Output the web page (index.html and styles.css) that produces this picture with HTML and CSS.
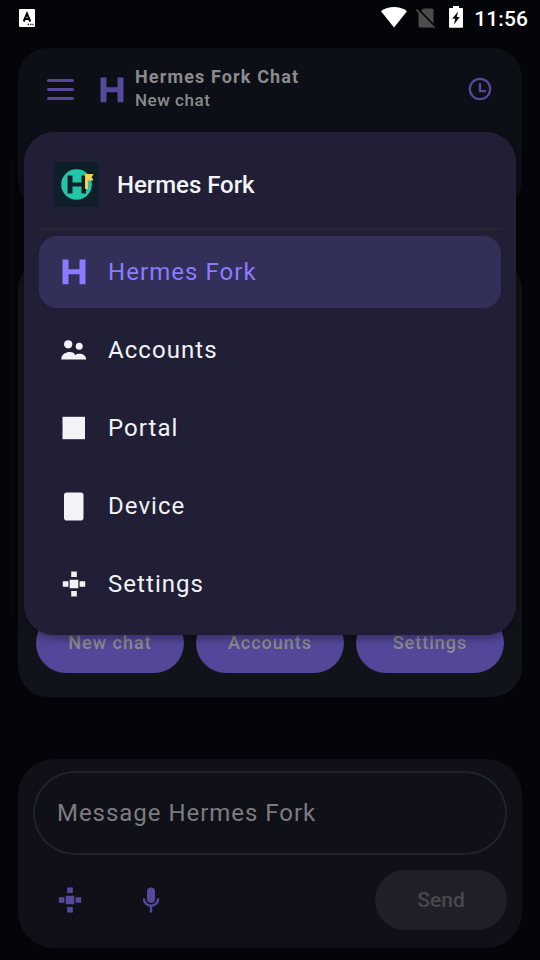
FILE: index.html
```html
<!DOCTYPE html>
<html lang="en">
<head>
<meta charset="utf-8">
<title>Hermes Fork Chat</title>
<link rel="stylesheet" href="styles.css">
</head>
<body>
<svg class="defs" width="0" height="0">
  <symbol id="h" viewBox="0 0 24 26"><path d="M.5 .5H6.500V10.300H17.500V.5H23.500V25.300H17.500V15.300H6.500V25.300H.5Z"/></symbol>
  <symbol id="pad" viewBox="0 0 24 26"><path d="M9.200.5h5.600v5.600H9.200zM9.200 19.900h5.600v5.600H9.200zM.8 10.200h5.600v5.600H.8zM17.600 10.200h5.600v5.600h-5.600zM7.700 8.700h8.600v8.600H7.700z"/></symbol>
</svg>
<div class="screen">
  <header class="status">
    <svg class="notif" width="16" height="18" viewBox="0 0 16 18"><rect width="16" height="18" rx="1" fill="#fff"/><path d="M4.700 12.500 8 4.600l3.300 7.900M5.900 10h4.200" fill="none" stroke="#05070a" stroke-width="2"/><path d="M8.500 14.800h1.500v1.500H8.500zM11 14.800h1.500v1.500H11zM13.300 14.800h1.300v1.500h-1.300z" fill="#333"/></svg>
    <svg class="wifi" width="26" height="21" viewBox="0 0 26 21"><path d="M0 4.200C7.500-1.400 18.500-1.400 26 4.200L13 20.600Z" fill="#fff"/></svg>
    <svg class="sim" width="20" height="22" viewBox="0 0 20 22"><path d="M7.500 1.500H16a1.500 1.500 0 0 1 1.500 1.500V19a1.500 1.500 0 0 1-1.500 1.500H4A1.500 1.500 0 0 1 2.500 19V6.500Z" fill="#4b4c4e"/><path d="M1.500 1.500 19.500 20" stroke="#05070a" stroke-width="2"/><path d="M.5 2.500 18.500 21" stroke="#4b4c4e" stroke-width="1.600"/></svg>
    <svg class="battery" width="14" height="22" viewBox="0 0 14 22"><path d="M4 0h6v2h3.200a.8.8 0 0 1 .8.8V21a.8.8 0 0 1-.8.8H.8A.8.8 0 0 1 0 21V2.800A.8.8 0 0 1 .8 2H4Z" fill="#fff"/><path d="M9 5.500 3.200 12.700H6.200L5 18.500 10.800 11H7.800Z" fill="#05070a"/></svg>
    <span class="clock">11:56</span>
  </header>
  <section class="card top">
    <svg class="burger" width="27" height="21" viewBox="0 0 27 21"><path d="M1.500 1.500h24M1.500 10.500h24M1.500 19.500h24" stroke="#56499b" stroke-width="3" stroke-linecap="round"/></svg>
    <svg class="brand" width="24" height="26"><use href="#h"/></svg>
    <div class="titles"><div class="title">Hermes Fork Chat</div><div class="subtitle">New chat</div></div>
    <svg class="history" width="24" height="24" viewBox="0 0 24 24" fill="none" stroke="#56499b"><circle cx="12" cy="12" r="10.200" stroke-width="2.200"/><path d="M12 6V14.200H18" stroke-width="2.300"/></svg>
  </section>
  <section class="card main">
    <div class="chip">New chat</div><div class="chip">Accounts</div><div class="chip">Settings</div>
  </section>
  <section class="composer">
    <div class="field">Message Hermes Fork</div>
    <div class="tools">
      <svg class="pad" width="24" height="26"><use href="#pad"/></svg>
      <svg class="mic" width="18" height="26" viewBox="0 0 18 26"><rect x="5" y=".5" width="8" height="15.500" rx="4" fill="#56499b"/><path d="M1.800 11.500a7.200 7.200 0 0 0 14.400 0M9 18.500V25.500" fill="none" stroke="#56499b" stroke-width="2.400"/></svg>
      <div class="send">Send</div>
    </div>
  </section>
  <nav class="menu">
    <div class="menu-head">
      <svg width="45" height="45" viewBox="0 0 45 45"><rect width="45" height="45" fill="#0e1f29"/><circle cx="22.500" cy="22.500" r="15.300" fill="#22c7a9"/><path d="M13.500 13.500h5v7h9v-7h4.500v18h-4.500v-7h-9v7h-5Z" fill="#0e1f29"/><path d="M31 12h8.500l-1.800 3.300 1.800 3.200H34v8.500h-3Z" fill="#f8cf53"/></svg>
      <span>Hermes Fork</span>
    </div>
    <div class="item active"><svg width="24" height="26"><use href="#h"/></svg><span>Hermes Fork</span></div>
    <div class="item"><svg class="people" width="26" height="20" viewBox="0 0 26 20"><circle cx="7.200" cy="4.300" r="4.100"/><circle cx="18.200" cy="6.300" r="3.500"/><path d="M.2 19.500C.5 10.800 13.500 10.300 14 15.300 17 12.600 25 13.500 25.200 19.500Z"/></svg><span>Accounts</span></div>
    <div class="item"><svg width="24" height="24"><rect x=".5" y=".8" width="22.500" height="22.400"/></svg><span>Portal</span></div>
    <div class="item"><svg width="24" height="30"><rect x="2" y="1.500" width="19.500" height="28" rx="2.800"/></svg><span>Device</span></div>
    <div class="item"><svg width="24" height="26"><use href="#pad"/></svg><span>Settings</span></div>
  </nav>
</div>
</body>
</html>
```
FILE: styles.css
```css
* { box-sizing: border-box; }
body { margin: 0; background: #040508; font-family: Roboto, "Liberation Sans", sans-serif; }
svg { display: block; flex: none; }
.defs { position: absolute; }
.screen { position: relative; width: 540px; height: 960px; overflow: hidden; display: flex; flex-direction: column; background: #040508; }
.status { height: 48px; flex: none; display: flex; align-items: flex-start; padding: 0 12px 0 19px; }
.notif { margin-top: 9px; }
.wifi { margin: 7px 0 0 auto; }
.sim { margin: 7px 0 0 9px; }
.battery { margin: 6px 0 0 13px; }
.clock { margin-left: 11px; width: 54px; text-align: right; white-space: nowrap; color: #fff; font-size: 21px; font-weight: 500; line-height: 38px; letter-spacing: .1px; }
.card { margin: 0 18px; border-radius: 30px; flex: none; display: flex; }
.top { height: 163px; background: #0c0f16; align-items: flex-start; padding: 0 30px 0 29px; }
.burger { margin-top: 31px; }
.brand { margin: 29px 0 0 26px; fill: #56499b; }
.titles { margin-left: 11px; padding-top: 17px; color: #8b8b8d; font-weight: 500; font-size: 18px; white-space: nowrap; }
.title { font-weight: 700; letter-spacing: 1.13px; line-height: 24px; }
.subtitle { font-size: 17px; letter-spacing: .52px; line-height: 22px; }
.history { margin: 29px 0 0 auto; }
.main { margin-top: 49px; height: 437px; background: #101319; align-items: flex-end; padding: 0 18px 24px; gap: 12px; }
.chip { flex: 1; height: 60px; border-radius: 30px; background: #54479a; color: #8c8c8e; font-size: 18px; font-weight: 500; letter-spacing: 1px; text-align: center; line-height: 60px; }
.composer { margin: 62px 18px 0; height: 189px; flex: none; border-radius: 36px; background: #101018; padding: 12px 15px; }
.field { height: 84px; border: 2px solid #1e242b; border-radius: 42px; padding-left: 22px; line-height: 80px; font-size: 24px; letter-spacing: .97px; color: #7c7c80; }
.tools { display: flex; align-items: center; margin-top: 15px; height: 60px; }
.pad { margin-left: 24.500px; fill: #56499b; }
.mic { margin-left: 60px; }
.send { margin-left: auto; width: 132px; height: 60px; border-radius: 30px; background: #1f1f27; color: #48484d; text-align: center; font-size: 21px; font-weight: 500; line-height: 60px; }
.menu { position: absolute; left: 24px; top: 132px; width: 492px; height: 503px; padding: 0 15px; border-radius: 30px; background: #201f36; color: #f2f3f5; fill: #f2f3f5; box-shadow: 0 4px 10px rgba(0,0,0,.35); }
.menu-head { height: 98px; margin-bottom: 6px; padding: 9px 0 0 15px; border-bottom: 2px solid #262831; display: flex; align-items: center; gap: 18px; font-size: 24px; font-weight: 500; letter-spacing: -.04px; }
.item { height: 72px; margin-bottom: 6px; border-radius: 18px; padding-left: 22px; display: flex; align-items: center; font-size: 24px; letter-spacing: 1.05px; }
.item svg { width: 26px; margin-right: 21px; }
.item svg:has(rect) { padding-left: 1px; }
.active { background: #322f58; color: #8c7aff; fill: #8c7aff; }
```
